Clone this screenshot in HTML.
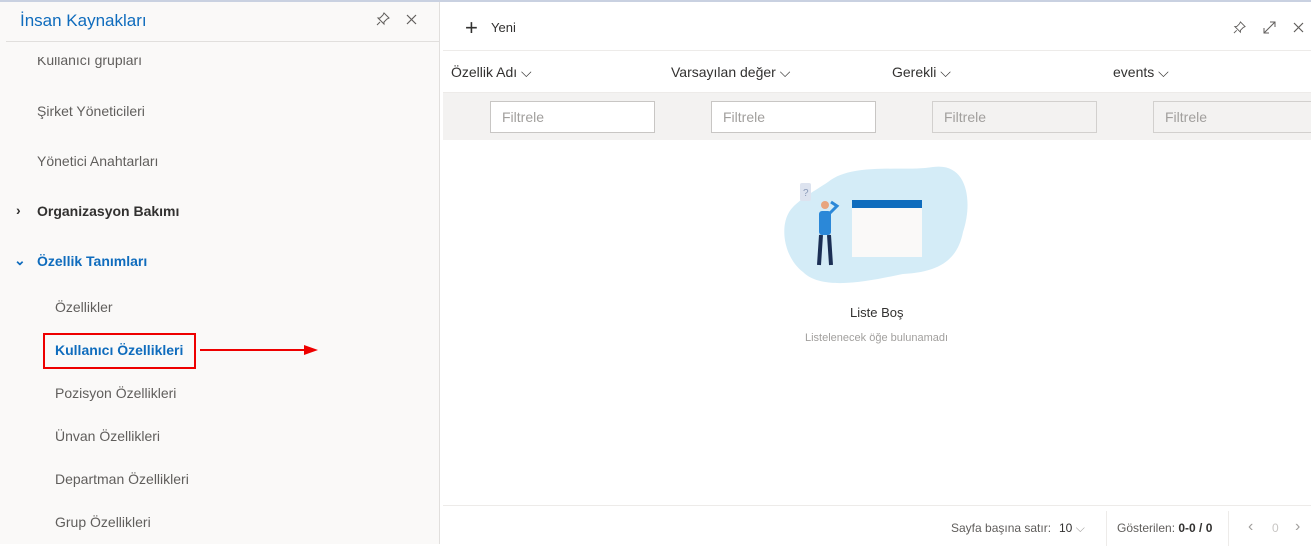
<!DOCTYPE html>
<html><head><meta charset="utf-8"><style>
*{box-sizing:border-box;margin:0;padding:0}
body{width:1311px;height:544px;overflow:hidden;font-family:"Liberation Sans",sans-serif;background:#fff;position:relative;border-top:2px solid #c9d1e1}
.l{position:absolute;left:0;top:0;width:440px;height:542px;background:#faf9f8;border-right:1px solid #e1dfdd}
.t{position:absolute;font-size:14px;color:#605e5c;white-space:nowrap}
.b{font-weight:bold;color:#323130}
.r{position:absolute;left:443px;top:0;right:0;bottom:0;background:#fff}
.in{position:absolute;top:99px;width:165px;height:32px;border:1px solid #c8c6c4;background:#fff;font-size:14px;color:#a19f9d;padding:7px 11px}
.in.d{background:#f3f2f1;border-color:#d2d0ce}
</style></head><body>
<div class="l">
 <div class="t" style="left:20px;top:9px;font-size:17px;color:#0f6cbd">İnsan Kaynakları</div>
 <svg style="position:absolute;left:376px;top:10px" width="14" height="14" viewBox="0 0 14 14" fill="none" stroke="#605e5c" stroke-width="1"><path d="M8 1l5 5-2 1-3 3 0 2-6-6 2 0 3-3z M4 10l-3 3"/></svg>
 <svg style="position:absolute;left:406px;top:12px" width="11" height="11" viewBox="0 0 11 11" stroke="#605e5c" stroke-width="1.2"><path d="M1 1l9 9M10 1l-9 9"/></svg>
 <div style="position:absolute;left:6px;top:39px;width:434px;height:1px;background:#e1dfdd"></div>
 <div style="position:absolute;left:0;top:55px;width:440px;height:14px;overflow:hidden"><div class="t" style="left:37px;top:-5px">Kullanıcı grupları</div></div>
 <div class="t" style="left:37px;top:101px">Şirket Yöneticileri</div>
 <div class="t" style="left:37px;top:151px">Yönetici Anahtarları</div>
 <div class="t b" style="left:16px;top:200px">›</div>
 <div class="t b" style="left:37px;top:201px">Organizasyon Bakımı</div>
 <div class="t b" style="left:14px;top:250px;color:#0f6cbd">⌄</div>
 <div class="t b" style="left:37px;top:251px;color:#0f6cbd">Özellik Tanımları</div>
 <div class="t" style="left:55px;top:297px">Özellikler</div>
 <div style="position:absolute;left:43px;top:331px;width:153px;height:36px;border:2px solid #e00"></div>
 <div class="t b" style="left:55px;top:340px;color:#0f6cbd">Kullanıcı Özellikleri</div>
 <div style="position:absolute;left:200px;top:347px;width:106px;height:2px;background:#e00"></div>
 <div style="position:absolute;left:304px;top:343px;width:0;height:0;border-left:14px solid #e00;border-top:5px solid transparent;border-bottom:5px solid transparent"></div>
 <div class="t" style="left:55px;top:383px">Pozisyon Özellikleri</div>
 <div class="t" style="left:55px;top:426px">Ünvan Özellikleri</div>
 <div class="t" style="left:55px;top:469px">Departman Özellikleri</div>
 <div class="t" style="left:55px;top:512px">Grup Özellikleri</div>
</div>
<div class="r">
 <div class="t" style="left:22px;top:13px;font-size:22px;color:#323130;font-weight:300">+</div>
 <div class="t" style="left:48px;top:18px;font-size:13px;color:#323130">Yeni</div>
 <svg style="position:absolute;left:790px;top:19px" width="13" height="13" viewBox="0 0 14 14" fill="none" stroke="#605e5c"><path d="M8 1l5 5-2 1-3 3 0 2-6-6 2 0 3-3z M4 10l-3 3"/></svg>
 <svg style="position:absolute;left:820px;top:19px" width="13" height="13" viewBox="0 0 13 13" fill="none" stroke="#605e5c"><path d="M1 12l11-11M7 1h5v5M1 7v5h5"/></svg>
 <svg style="position:absolute;left:850px;top:20px" width="11" height="11" viewBox="0 0 11 11" stroke="#605e5c" stroke-width="1.2"><path d="M1 1l9 9M10 1l-9 9"/></svg>
 <div style="position:absolute;left:0;right:0;top:48px;height:1px;background:#edebe9"></div>
 <div class="t" style="left:8px;top:62px;color:#323130">Özellik Adı ⌵</div>
 <div class="t" style="left:228px;top:62px;color:#323130">Varsayılan değer ⌵</div>
 <div class="t" style="left:449px;top:62px;color:#323130">Gerekli ⌵</div>
 <div class="t" style="left:670px;top:62px;color:#323130">events ⌵</div>
 <div style="position:absolute;left:0;right:0;top:90px;height:48px;background:#f3f2f1;border-top:1px solid #edebe9"></div>
 <div class="in" style="left:47px">Filtrele</div>
 <div class="in" style="left:268px">Filtrele</div>
 <div class="in d" style="left:489px">Filtrele</div>
 <div class="in d" style="left:710px">Filtrele</div>
 <svg style="position:absolute;left:340px;top:160px" width="185" height="125" viewBox="0 0 185 125">
  <path d="M45 20 C70 0 120 10 150 5 C185 0 190 40 180 70 C175 95 160 110 120 112 C90 118 40 130 20 110 C0 95 -5 60 10 45 C20 35 30 30 45 20Z" fill="#d4ecf7"/>
  <rect x="17" y="21" width="11" height="18" rx="2" fill="#dde3ef"/><text x="20" y="34" font-size="10" fill="#8a9ab8" font-family="Liberation Sans">?</text>
  <rect x="69" y="38" width="70" height="57" fill="#faf9f8"/><rect x="69" y="38" width="70" height="8" fill="#0f6cbd"/>
  <circle cx="42" cy="43" r="4" fill="#e8a57e"/><rect x="36" y="49" width="12" height="24" rx="3" fill="#2b88d8"/>
  <path d="M38 73l-2 30M46 73l2 30" stroke="#1b2f55" stroke-width="4"/><path d="M46 52l8-8-6-4" stroke="#2b88d8" stroke-width="3" fill="none"/>
 </svg>
 <div class="t" style="left:407px;top:303px;font-size:13px;color:#323130">Liste Boş</div>
 <div class="t" style="left:362px;top:330px;font-size:11px;color:#a19f9d">Listelenecek öğe bulunamadı</div>
 <div style="position:absolute;left:0;right:0;top:503px;height:1px;background:#edebe9"></div>
 <div class="t" style="left:508px;top:519px;font-size:12px;color:#605e5c">Sayfa başına satır:</div>
 <div class="t" style="left:616px;top:519px;font-size:12px;color:#323130">10 <span style="color:#a19f9d">⌵</span></div>
 <div style="position:absolute;left:663px;top:509px;width:1px;height:35px;background:#edebe9"></div>
 <div class="t" style="left:674px;top:519px;font-size:12px;color:#605e5c">Gösterilen: <b style="color:#323130">0-0 / 0</b></div>
 <div style="position:absolute;left:785px;top:509px;width:1px;height:35px;background:#edebe9"></div>
 <div class="t" style="left:805px;top:516px;font-size:16px;color:#a19f9d">‹</div>
 <div class="t" style="left:829px;top:519px;font-size:12px;color:#c8c6c4">0</div>
 <div class="t" style="left:852px;top:516px;font-size:16px;color:#a19f9d">›</div>
</div>
</body></html>
